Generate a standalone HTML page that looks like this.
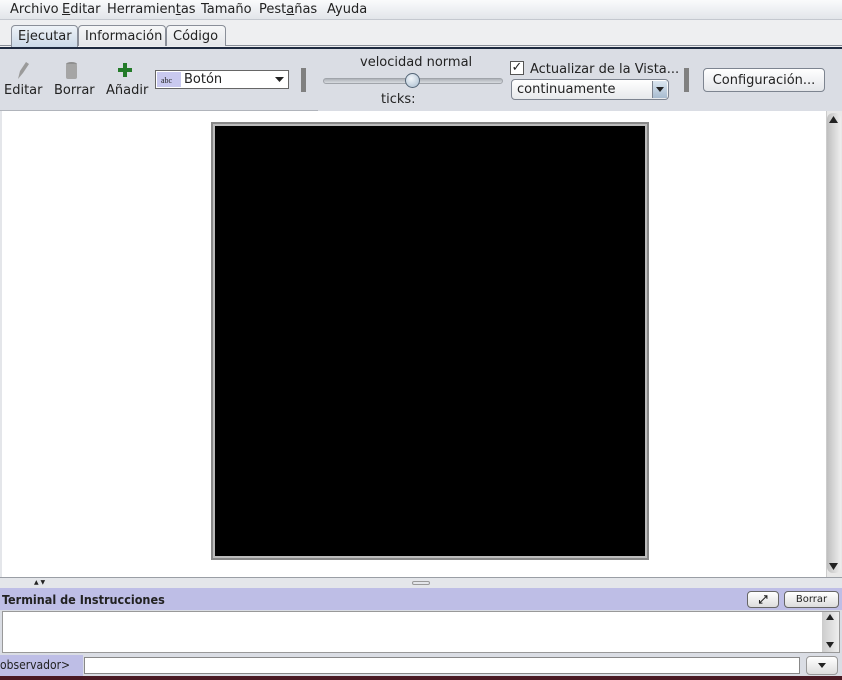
<!DOCTYPE html>
<html><head><meta charset="utf-8"><style>
*{margin:0;padding:0;box-sizing:border-box}
body{width:842px;height:680px;overflow:hidden;position:relative;background:#dadde4;font-family:"DejaVu Sans","Liberation Sans",sans-serif;font-size:13px;color:#222}
.a{position:absolute}
.menu{left:0;top:0;width:842px;height:20px;background:linear-gradient(#fafbfc,#e2e5ea);border-bottom:1px solid #c4c8cf}
.menu span{position:absolute;top:2px}
.tabrow{left:0;top:20px;width:842px;height:27px;background:#eeeff1}
.tab{top:25px;height:21px;border:1px solid #8a8f99;border-bottom:none;border-radius:4px 4px 0 0;background:linear-gradient(#f6f7f8,#e4e6ea);padding:3px 6px 0;font-size:13px}
.tb{left:0;top:47px;width:842px;height:64px;background:#dadde4;border-top:2px solid #1e2a40}
.lbl{font-size:13px}
</style></head><body>
<div class="a menu">
<span style="left:10px">Archivo</span><span style="left:62px"><u>E</u>ditar</span><span style="left:107px">Herramien<u>t</u>as</span><span style="left:201px">Tamaño</span><span style="left:259px">Pest<u>a</u>ñas</span><span style="left:327px">Ayuda</span>
</div>
<div class="a tabrow"></div>
<div class="a" style="left:0;top:45px;width:842px;height:1px;background:#8a8f99"></div>
<div class="a tab" style="left:11px;width:67px;background:linear-gradient(#eef3f8,#c9d7e6);height:23px">Ejecutar</div>
<div class="a tab" style="left:78px;width:88px">Información</div>
<div class="a tab" style="left:166px;width:60px">Código</div>
<div class="a tb"></div>
<svg class="a" style="left:15px;top:61px" width="16" height="19"><path d="M3 18 L5 10 L11 1 L14 3 L8 12 Z" fill="#9a9a9a"/></svg>
<svg class="a" style="left:64px;top:61px" width="15" height="19"><ellipse cx="7.5" cy="3" rx="5.5" ry="2" fill="#8f8f8f"/><rect x="2" y="3" width="11" height="15" rx="2" fill="#a5a5a5"/></svg>
<svg class="a" style="left:118px;top:63px" width="14" height="14"><rect x="5" y="0" width="4" height="14" fill="#237b2a"/><rect x="0" y="5" width="14" height="4" fill="#237b2a"/></svg>
<div class="a lbl" style="left:4px;top:83px">Editar</div>
<div class="a lbl" style="left:54px;top:83px">Borrar</div>
<div class="a lbl" style="left:106px;top:83px">Añadir</div>
<div class="a" style="left:155px;top:70px;width:134px;height:19px;border:1px solid #666;background:#fff"></div>
<div class="a" style="left:157px;top:72px;width:24px;height:15px;background:#c9c9ef;font-size:8px;font-family:'Liberation Serif',serif;padding:4px 0 0 4px">abc</div>
<div class="a" style="left:184px;top:72px">Botón</div>
<svg class="a" style="left:275px;top:77px" width="9" height="6"><path d="M0 0H9L4.5 5Z" fill="#222"/></svg>
<div class="a" style="left:301px;top:68px;width:5px;height:24px;background:#808080"></div>
<div class="a" style="left:360px;top:55px">velocidad normal</div>
<div class="a" style="left:323px;top:78px;width:180px;height:6px;border-radius:3px;background:linear-gradient(#aeb2b8,#d8dbe0);border:1px solid #a0a4aa"></div>
<div class="a" style="left:405px;top:73px;width:15px;height:15px;border-radius:50%;background:radial-gradient(circle at 40% 35%,#f2f6fa,#a8bccf);border:1px solid #556677"></div>
<div class="a" style="left:381px;top:92px">ticks:</div>
<div class="a" style="left:510px;top:61px;width:14px;height:14px;border:1px solid #555;background:#fff;font-size:13px;line-height:12px;text-align:center;font-weight:bold">✓</div>
<div class="a" style="left:530px;top:62px">Actualizar de la Vista...</div>
<div class="a" style="left:511px;top:79px;width:158px;height:21px;border:1px solid #7d8490;border-radius:4px;background:linear-gradient(#fff,#e7e9ec);padding:2px 5px 0">continuamente</div>
<div class="a" style="left:652px;top:81px;width:15px;height:17px;background:linear-gradient(#dbe6f0,#a7bbcf);border-left:1px solid #7d8490"></div>
<svg class="a" style="left:656px;top:87px" width="8" height="6"><path d="M0 0H8L4 5Z" fill="#222"/></svg>
<div class="a" style="left:684px;top:68px;width:5px;height:24px;background:#808080"></div>
<div class="a" style="left:703px;top:68px;width:122px;height:24px;border:1px solid #7d8490;border-radius:4px;background:linear-gradient(#fff,#e4e6ea);text-align:center;padding-top:4px">Configuración...</div>
<div class="a" style="left:0;top:110px;width:318px;height:1px;background:#b0b4bb"></div>
<div class="a" style="left:0;top:111px;width:826px;height:466px;background:#fff;border-left:2px solid #e4e6ea"></div>
<div class="a" style="left:826px;top:111px;width:16px;height:466px;background:#e8e8e8;border-left:1px solid #ccc"></div>
<div class="a" style="left:827px;top:113px;width:14px;height:460px;background:linear-gradient(90deg,#bfbfbf,#eee);border-radius:6px"></div>
<svg class="a" style="left:829px;top:116px" width="9" height="8"><path d="M0 7H9L4.5 0Z" fill="#222"/></svg>
<svg class="a" style="left:829px;top:563px" width="9" height="8"><path d="M0 0H9L4.5 7Z" fill="#222"/></svg>
<div class="a" style="left:211px;top:122px;width:438px;height:438px;border:2px solid #888;background:#fff"></div>
<div class="a" style="left:215px;top:126px;width:430px;height:430px;background:#000;outline:2px solid #bbb"></div>
<div class="a" style="left:0;top:577px;width:842px;height:11px;background:#e4e6ea;border-top:1px solid #9a9ea5"></div>
<div class="a" style="left:34px;top:579px;font-size:6px">▲ ▼</div>
<div class="a" style="left:412px;top:581px;width:18px;height:4px;border:1px solid #999;border-radius:2px"></div>
<div class="a" style="left:0;top:588px;width:842px;height:22px;background:#bebee6"></div>
<div class="a" style="left:2px;top:592px;font-weight:bold;font-size:12.5px;font-family:'DejaVu Sans Condensed','DejaVu Sans',sans-serif">Terminal de Instrucciones</div>
<div class="a" style="left:747px;top:591px;width:32px;height:17px;border:1px solid #666;border-radius:4px;background:linear-gradient(#fff,#ddd);text-align:center;font-size:11px;line-height:15px;font-weight:bold">⤢</div>
<div class="a" style="left:784px;top:591px;width:55px;height:17px;border:1px solid #666;border-radius:4px;background:linear-gradient(#fff,#ddd);text-align:center;font-size:10px;line-height:15px">Borrar</div>
<div class="a" style="left:2px;top:611px;width:838px;height:42px;background:#fff;border:1px solid #999"></div>
<div class="a" style="left:822px;top:612px;width:17px;height:40px;background:linear-gradient(90deg,#ccc,#eee)"></div>
<svg class="a" style="left:826px;top:614px" width="8" height="7"><path d="M0 6H8L4 0Z" fill="#222"/></svg>
<svg class="a" style="left:826px;top:642px" width="8" height="7"><path d="M0 0H8L4 6Z" fill="#222"/></svg>
<div class="a" style="left:0;top:654px;width:842px;height:22px;background:#dadde4"></div>
<div class="a" style="left:0;top:655px;width:83px;height:21px;background:#bebee6;font-size:12px;padding-top:3px;font-family:'DejaVu Sans Condensed','DejaVu Sans',sans-serif">observador&gt;</div>
<div class="a" style="left:84px;top:657px;width:716px;height:17px;background:#fff;border:1px solid #888"></div>
<div class="a" style="left:806px;top:656px;width:32px;height:19px;border:1px solid #999;border-radius:4px;background:linear-gradient(#fff,#ddd)"></div>
<svg class="a" style="left:818px;top:663px" width="8" height="6"><path d="M0 0H8L4 5Z" fill="#222"/></svg>
<div class="a" style="left:0;top:676px;width:842px;height:4px;background:#4a1a24"></div>
</body></html>
